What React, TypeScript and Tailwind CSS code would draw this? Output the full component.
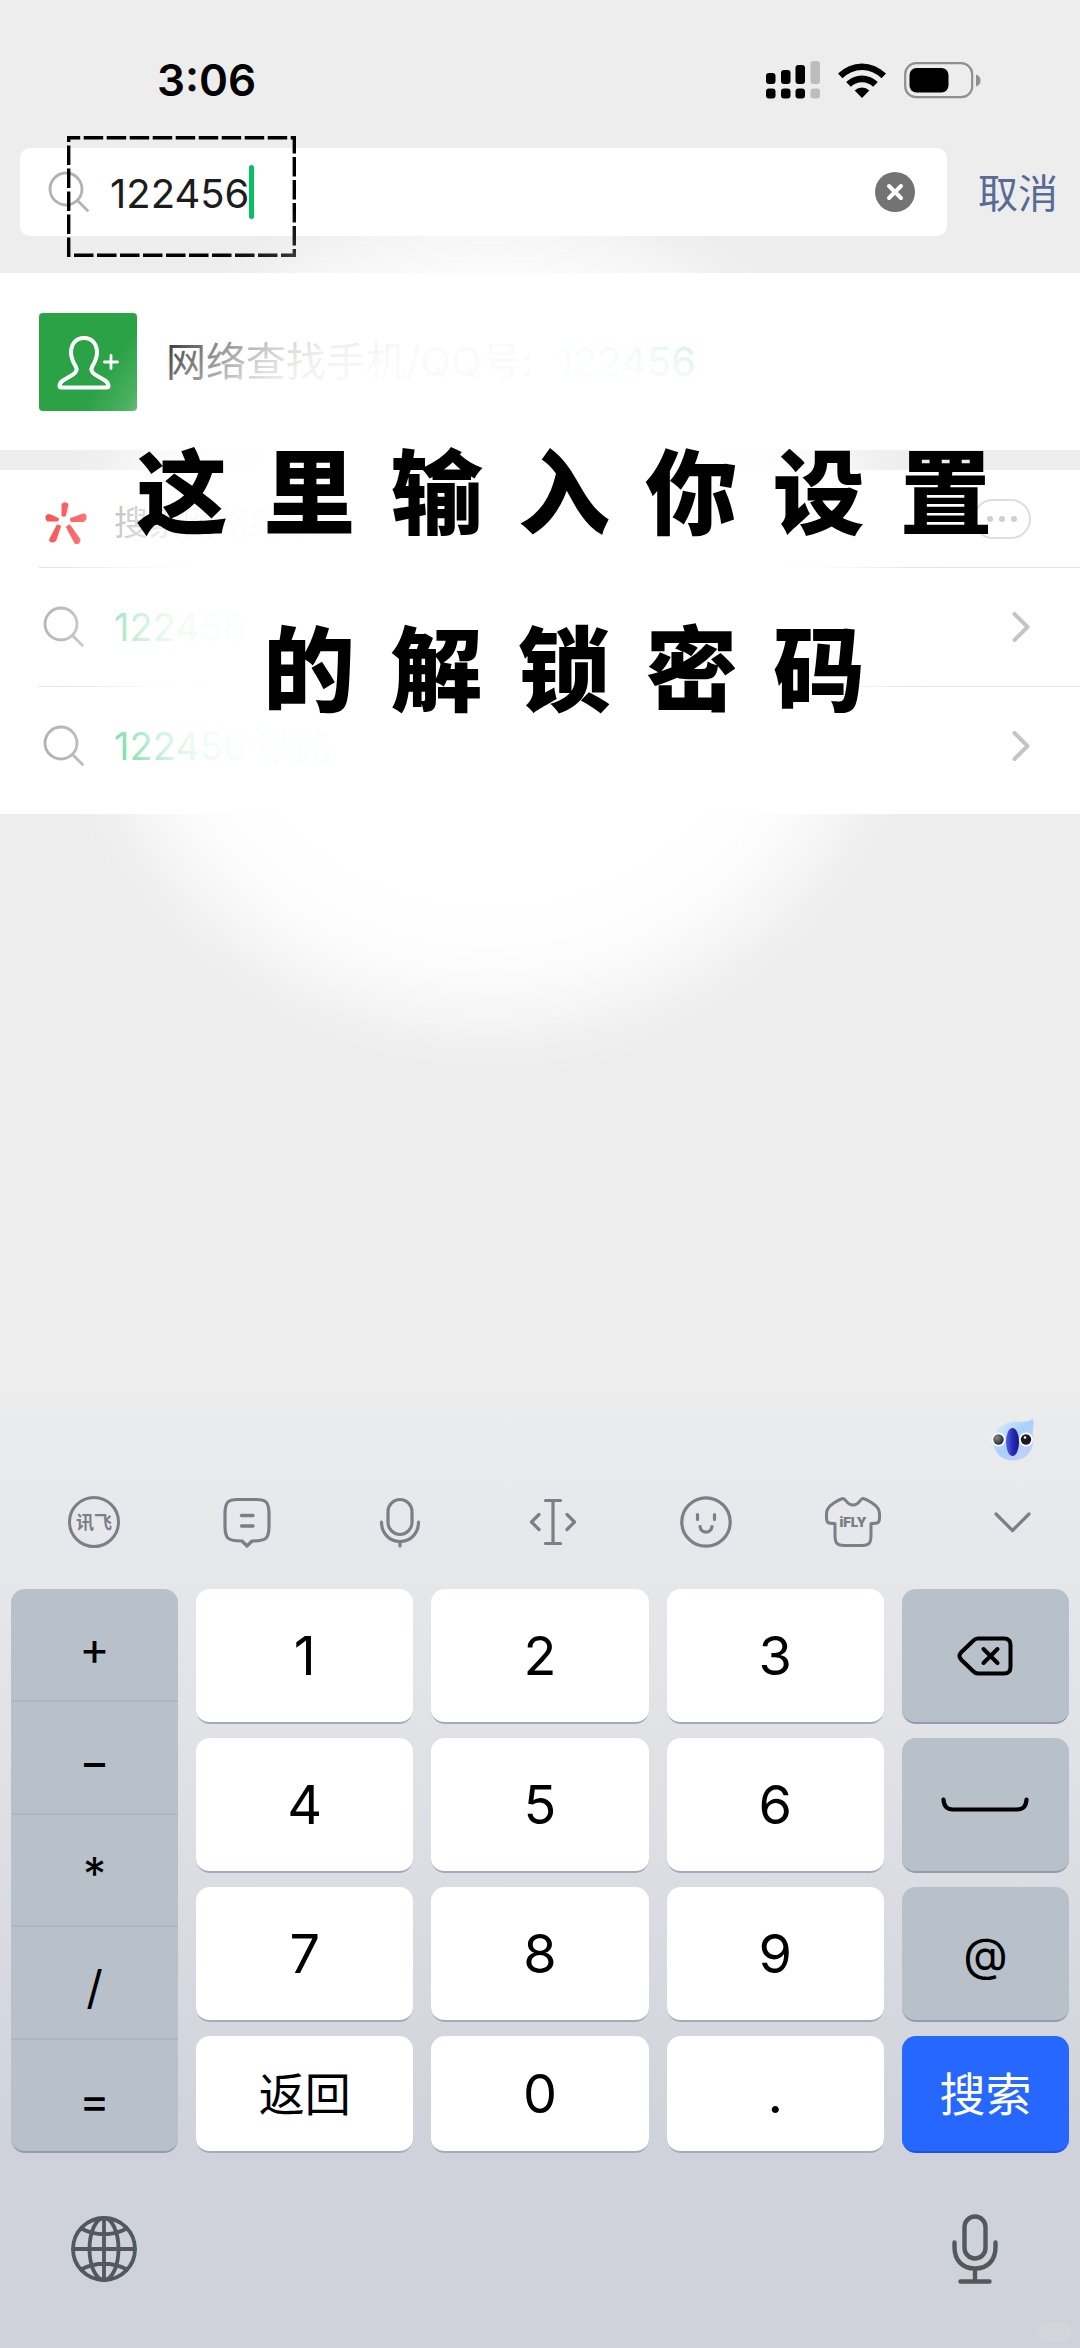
import React, { useState } from "react";

type IconProps = { className?: string };

const stroke = {
  fill: "none",
  stroke: "currentColor",
  strokeLinecap: "round" as const,
  strokeLinejoin: "round" as const,
};

function Magnifier({ className }: IconProps) {
  return (
    <svg viewBox="0 0 42 42" className={className} {...stroke} strokeWidth="2.8" aria-hidden="true">
      <circle cx="18" cy="18" r="16" />
      <path d="M29.500 29.500 39.500 39.500" />
    </svg>
  );
}

function Chevron({ className }: IconProps) {
  return (
    <svg viewBox="0 0 18 32" className={className} {...stroke} strokeWidth="4" aria-hidden="true">
      <path d="M2.500 3 15.500 16 2.500 29" />
    </svg>
  );
}

function StatusIcons() {
  return (
    <div className="flex items-center">
      <svg viewBox="0 0 54 38" className="h-[38px] w-[54px]" aria-label="信号">
        <rect x="0" y="12" width="9.500" height="11" rx="3" />
        <rect x="15" y="9" width="9.500" height="14" rx="3" />
        <rect x="29.500" y="4" width="9.500" height="19" rx="3" />
        <rect x="44.500" y="0" width="9.500" height="23" rx="3" fill="#bdbdbd" />
        <rect x="0" y="27.500" width="9.500" height="10" rx="3" />
        <rect x="15" y="27.500" width="9.500" height="10" rx="3" />
        <rect x="29.500" y="27.500" width="9.500" height="10" rx="3" />
        <rect x="44.500" y="27.500" width="9.500" height="10" rx="3" fill="#bdbdbd" />
      </svg>
      <svg viewBox="0 0 48 36" className="ml-[18px] h-9 w-12" aria-label="无线网络">
        <path d="M0 11.500A34 34 0 0 1 48 11.500L43.500 16.200A27.500 27.500 0 0 0 4.500 16.200Z" />
        <path d="M8.200 20A22.500 22.500 0 0 1 39.800 20L35.200 24.800A16 16 0 0 0 12.800 24.800Z" />
        <path d="M16.700 28.500A10.500 10.500 0 0 1 31.300 28.500L24 36Z" />
      </svg>
      <svg viewBox="0 0 78 37" className="ml-[18px] h-[37px] w-[78px]" aria-label="电池">
        <rect x="1.200" y="1.200" width="67" height="34" rx="11" fill="none" stroke="#8f8f8f" strokeWidth="2.200" />
        <rect x="5.500" y="6" width="39" height="24.500" rx="7" />
        <path d="M72 12.500Q76.500 14 76.500 18.500T72 24.500Z" fill="#8f8f8f" />
      </svg>
    </div>
  );
}

function ContactIcon() {
  return (
    <span className="flex h-[98px] w-[98px] shrink-0 items-center justify-center rounded bg-[#2ba245]">
      <svg viewBox="0 0 98 98" className="h-[98px] w-[98px] text-white" {...stroke} strokeWidth="4" aria-hidden="true">
        <path d="M45 25C36.500 25 32 31.500 32 39.500C32 46 35 50.500 37 54C38.500 57 37 59.500 34 61.500L24 67.500C21 69.500 20.500 71 20.500 73C20.500 74.500 21.500 74.500 22.500 74.500H67.500C68.500 74.500 69.500 74.500 69.500 73C69.500 71 69 69.500 66 67.500L56 61.500C53 59.500 51.500 57 53 54C55 50.500 58 46 58 39.500C58 31.500 53.500 25 45 25Z" />
        <path d="M72 42.500V55.500M65.500 49H78.500" strokeWidth="2.800" />
      </svg>
    </span>
  );
}

function Spark() {
  return (
    <svg viewBox="0 0 42 42" className="ml-1.5 h-[42px] w-[42px] text-[#fa5151]" fill="currentColor" stroke="currentColor" strokeWidth="2" strokeLinejoin="round" aria-hidden="true">
      <path d="M17.500 2.500Q20 0 22.500 2.500L20 13.500H17.500Z" />
      <path d="M1.500 14.500Q3 12 5.500 13.500L13 17 12.500 18.500 3 18.500Q1 17.500 1.500 14.500Z" />
      <path d="M40.500 14Q39.500 11.500 37 13L26 17 26.500 19 38 19Q41 18 40.500 14Z" />
      <path d="M12.500 23.500 15 24.500 10.500 38Q7.500 41 5 38Z" />
      <path d="M22 25 24.500 23.500 34.500 37.500Q34.500 41.500 30.500 41Z" />
    </svg>
  );
}

const tool = "h-[52px] w-[52px]";

function BrandIcon() {
  return (
    <svg viewBox="0 0 52 52" className={tool} {...stroke} strokeWidth="3" aria-hidden="true">
      <circle cx="26" cy="26" r="24.500" />
      <text x="26" y="32.500" textAnchor="middle" fontSize="18" fontWeight="700" fill="currentColor" stroke="none" fontFamily="'Noto Sans CJK SC', sans-serif">
        讯飞
      </text>
    </svg>
  );
}

function NoteIcon() {
  return (
    <svg viewBox="0 0 52 52" className={tool} {...stroke} strokeWidth="3.200" aria-hidden="true">
      <path d="M21 45C7 45 4 43 4 30V18C4 6 7 3.500 17 3.500H35C45 3.500 48 6 48 18V30C48 43 45 45 31 45L26 50Z" />
      <path d="M20.500 19.500H32M20.500 30H32" strokeWidth="3.400" />
    </svg>
  );
}

function SmallMic() {
  return (
    <svg viewBox="0 0 52 52" className={tool} {...stroke} strokeWidth="3.200" aria-hidden="true">
      <rect x="14" y="3.500" width="24" height="35" rx="12" />
      <path d="M7.500 26C7.500 37 15 45.500 26 45.500S44.500 37 44.500 26M26 45.500V50" />
    </svg>
  );
}

function CursorIcon() {
  return (
    <svg viewBox="0 0 52 52" className={tool} {...stroke} strokeWidth="3.200" aria-hidden="true">
      <path d="M18.500 4.500H33.500M18.500 47.500H33.500M26 4.500V47.500M12 18.500 4.500 26 12 33.500M40 18.500 47.500 26 40 33.500" />
    </svg>
  );
}

function SmileIcon() {
  return (
    <svg viewBox="0 0 52 52" className={tool} {...stroke} strokeWidth="3.200" aria-hidden="true">
      <circle cx="26" cy="26" r="24.200" />
      <path d="M17.500 18.500V23.500M34.500 18.500V23.500M20 30.500C21 38 31 38 32 30.500" />
    </svg>
  );
}

function ShirtIcon() {
  return (
    <svg viewBox="0 0 56 52" className="h-[52px] w-14" {...stroke} strokeWidth="3" aria-hidden="true">
      <path d="M18 2.500C21 2.500 21.500 9 28 9S35 2.500 38 2.500C42 3.500 48 7.500 51 10C55 14 54.500 17 54.500 22C54.500 27 53 27.500 46 27.500V39C46 47 44 49.500 37 49.500H19C12 49.500 10 47 10 39V27.500C3 27.500 1.500 27 1.500 22C1.500 17 1 14 5 10C8 7.500 14 3.500 18 2.500Z" />
      <text x="28" y="31" textAnchor="middle" fontSize="13" fontWeight="900" fill="currentColor" stroke="none" fontFamily="Inter, sans-serif">
        iFLY
      </text>
    </svg>
  );
}

function CollapseIcon() {
  return (
    <svg viewBox="0 0 52 52" className={tool} {...stroke} strokeWidth="3.200" aria-hidden="true">
      <path d="M10 18 26.500 34.500 43 18" />
    </svg>
  );
}

function Mascot() {
  return (
    <svg viewBox="0 0 44 44" className="h-11 w-11" aria-hidden="true">
      <defs>
        <linearGradient id="body" x1="0" y1="0" x2="1" y2="1">
          <stop offset="0" stopColor="#e6eefb" />
          <stop offset="0.5" stopColor="#a9d0fc" />
          <stop offset="1" stopColor="#cfcffb" />
        </linearGradient>
        <linearGradient id="beak" x1="0" y1="0" x2="1" y2="0">
          <stop offset="0" stopColor="#5560e6" />
          <stop offset="0.5" stopColor="#2a2cb8" />
          <stop offset="1" stopColor="#17158a" />
        </linearGradient>
        <radialGradient id="eye" cx="0.35" cy="0.35" r="0.7">
          <stop offset="0" stopColor="#85888c" />
          <stop offset="1" stopColor="#26282c" />
        </radialGradient>
      </defs>
      <path d="M42 1C43.500 7 41 12 42 18C44 33 35 42.500 22 42.500C10 42.500 2 34 2 22C4 10 13 4 24 3.500C32 4 38 4 42 1Z" fill="url(#body)" />
      <circle cx="7.500" cy="21.500" r="7" fill="#fff" />
      <circle cx="35" cy="21.500" r="7" fill="#fff" />
      <circle cx="7.500" cy="21.500" r="5.200" fill="url(#eye)" />
      <circle cx="35" cy="21.500" r="5.200" fill="#191a1f" />
      <circle cx="34" cy="19.500" r="1.300" fill="#fff" />
      <ellipse cx="21.500" cy="24" rx="6.500" ry="14" fill="url(#beak)" />
    </svg>
  );
}

function Backspace() {
  return (
    <svg viewBox="0 0 56 40" className="h-10 w-14" {...stroke} strokeWidth="4" aria-hidden="true">
      <path d="M21 2.500H47Q53.500 2.500 53.500 9V31Q53.500 37.500 47 37.500H21Q18.500 37.500 16.500 35.500L4 23.500Q1 20 4 16.500L16.500 4.500Q18.500 2.500 21 2.500Z" />
      <path d="M26.500 13 40.500 27M40.500 13 26.500 27" />
    </svg>
  );
}

function SpaceBar() {
  return (
    <svg viewBox="0 0 88 16" className="h-4 w-[88px]" {...stroke} strokeWidth="4.200" aria-hidden="true">
      <path d="M2.500 2.500Q3 12.500 12 12.500H76Q85 12.500 85.500 2.500" />
    </svg>
  );
}

function Globe() {
  return (
    <svg viewBox="0 0 66 66" className="h-[66px] w-[66px]" {...stroke} strokeWidth="3.800" aria-hidden="true">
      <circle cx="33" cy="33" r="31" />
      <ellipse cx="33" cy="33" rx="14.500" ry="31" />
      <path d="M33 2V64M2 33H64M10 12.500Q33 24 56 12.500M10 53.500Q33 42 56 53.500" />
    </svg>
  );
}

function LargeMic() {
  return (
    <svg viewBox="0 0 46 70" className="h-[70px] w-[46px]" {...stroke} strokeWidth="4.400" aria-hidden="true">
      <rect x="12.500" y="2.500" width="21" height="42" rx="10.500" />
      <path d="M2.500 28.500V33C2.500 46 10 54.500 23 54.500S43.500 46 43.500 33V28.500M23 54.500V67.500M8.500 67.500H37.500" />
    </svg>
  );
}

const whiteKey = "flex items-center justify-center rounded-[14px] border-b-2 border-[#a3aabb] bg-white";
const greyKey = "flex items-center justify-center rounded-[14px] border-b-2 border-[#939bb0] bg-[#b8c0ca]";

function Key({ children, label, tone = "white" }: { children: React.ReactNode; label?: string; tone?: "white" | "grey" }) {
  return (
    <button type="button" aria-label={label} className={tone === "white" ? whiteKey : greyKey}>
      {children}
    </button>
  );
}

const suggestions = ["122456", "122456 铁路"];
const symbols = ["+", "−", "*", "/", "="];

export default function App() {
  const [query, setQuery] = useState("122456");

  return (
    <div className="relative flex min-h-screen flex-col overflow-hidden bg-[#ededed] font-[Inter,'Noto_Sans_CJK_SC',sans-serif] text-black">
      <header>
        <div className="flex h-[148px] items-center justify-between pt-3 pr-[98px] pl-[157px]">
          <time className="text-[44px] leading-none font-semibold">3:06</time>
          <StatusIcons />
        </div>
        <form className="relative flex items-center pb-[37px] pl-5" onSubmit={(e) => e.preventDefault()}>
          <div className="flex h-[88px] flex-1 items-center rounded-[10px] bg-white pr-8 pl-7">
            <Magnifier className="h-[42px] w-[42px] shrink-0 text-[#b2b2b2]" />
            <input
              aria-label="搜索"
              value={query}
              onChange={(e) => setQuery(e.target.value)}
              className="ml-5 [field-sizing:content] pt-1 text-[40px] leading-[54px] text-[#1c1c1c] outline-none"
            />
            <span className="h-[54px] w-[5px] rounded-sm bg-[#07c160]" />
            <button type="button" aria-label="清除" onClick={() => setQuery("")} className="ml-auto flex h-10 w-10 items-center justify-center rounded-full bg-[#737373] text-white">
              <svg viewBox="0 0 40 40" className="h-10 w-10" {...stroke} strokeWidth="4" aria-hidden="true">
                <path d="M14 14 26 26M26 14 14 26" />
              </svg>
            </button>
          </div>
          <button type="button" className="pt-1 pr-[22px] pl-[31px] text-[40px] leading-none text-[#576b95]">
            取消
          </button>
          <svg viewBox="0 0 229 121" className="pointer-events-none absolute -top-3 left-[67px] h-[121px] w-[229px]" fill="none" stroke="#000" strokeWidth="3.400" strokeDasharray="19.500 3.500" strokeDashoffset="8" aria-hidden="true">
            <rect x="1.700" y="1.700" width="225.600" height="117.600" />
          </svg>
        </form>
      </header>

      <main className="flex-1">
        <button type="button" className="flex h-[177px] w-full items-center gap-[29px] bg-white pl-[39px] text-left">
          <ContactIcon />
          <span className="text-[40px] leading-none text-[#1c1c1c]">
            网络查找手机/QQ号: <span className="ml-3 text-[#07c160]">122456</span>
          </span>
        </button>

        <section className="mt-5 bg-white pb-[9px]">
          <div className="ml-[39px] flex h-[98px] items-center border-b border-[#e2e2e2] pr-[49px]">
            <div className="flex items-center pt-2">
              <Spark />
              <h2 className="ml-[27px] text-[34px] leading-none text-[#8a8a8a]">搜索网络结果</h2>
            </div>
            <button type="button" aria-label="更多" className="ml-auto flex h-10 w-[58px] items-center justify-center gap-1.5 rounded-full border-2 border-[#dedede]">
              <span className="h-1.5 w-1.5 rounded-full bg-[#cfcfcf]" />
              <span className="h-1.5 w-1.5 rounded-full bg-[#cfcfcf]" />
              <span className="h-1.5 w-1.5 rounded-full bg-[#cfcfcf]" />
            </button>
          </div>
          <ul>
            {suggestions.map((text, i) => (
              <li key={text} className={i === 0 ? "ml-[39px] border-b border-[#e2e2e2]" : "ml-[39px]"}>
                <a href="#result" className="flex h-[118px] items-center pr-[50px] pl-1">
                  <Magnifier className="h-[42px] w-[42px] text-[#b2b2b2]" />
                  <span className="ml-[29px] text-[38px] leading-none text-[#07c160]">{text}</span>
                  <Chevron className="ml-auto h-8 w-[18px] text-[#c4c4c4]" />
                </a>
              </li>
            ))}
          </ul>
        </section>
      </main>

      {/* Soft spotlight behind the caption */}
      <div className="pointer-events-none absolute top-[164px] left-[30px] h-[920px] w-[920px] bg-[radial-gradient(circle,rgba(255,255,255,0.98)_280px,rgba(255,255,255,0.93)_320px,rgba(255,255,255,0.8)_350px,rgba(255,255,255,0.45)_395px,rgba(255,255,255,0.15)_425px,transparent_460px)]" />

      <div className="pointer-events-none absolute inset-x-0 top-[398px] flex flex-col items-center pl-12 font-['Noto_Sans_CJK_SC',sans-serif] text-[92px] leading-[177px] font-black">
        <p className="w-[856px] [text-align-last:justify]">这里输入你设置</p>
        <p className="w-[602px] [text-align-last:justify]">的解锁密码</p>
      </div>

      <section aria-label="键盘" className="bg-linear-to-b from-[#ebecee] via-[#dfe1e5] via-40% to-[#cfd2da] to-80%">
        <div className="flex h-[82px] items-center justify-end pr-[45px]">
          <Mascot />
        </div>
        <div className="flex h-[82px] items-center justify-between pr-[30px] pl-[68px] text-[#7b7f87]">
          <div className="flex gap-[101px]">
            <button type="button" aria-label="讯飞输入法"><BrandIcon /></button>
            <button type="button" aria-label="短语"><NoteIcon /></button>
            <button type="button" aria-label="语音"><SmallMic /></button>
            <button type="button" aria-label="光标"><CursorIcon /></button>
            <button type="button" aria-label="表情"><SmileIcon /></button>
          </div>
          <button type="button" aria-label="皮肤"><ShirtIcon /></button>
          <button type="button" aria-label="收起" className="flex w-[76px] justify-center"><CollapseIcon /></button>
        </div>

        <div className="grid grid-cols-[167fr_217fr_217fr_217fr_167fr] grid-rows-[135px_135px_135px_117px] gap-x-[18px] gap-y-3.5 px-[11px] pt-[26px] text-[54px] leading-none">
          <div className="row-span-4 flex flex-col divide-y-2 divide-[#aeb6c2] overflow-hidden rounded-[14px] border-b-2 border-[#939bb0] bg-[#b8c0ca] text-[46px]">
            {symbols.map((s) => (
              <button key={s} type="button" className="flex-1 pt-2 leading-none">
                {s}
              </button>
            ))}
          </div>
          <Key>1</Key>
          <Key>2</Key>
          <Key>3</Key>
          <Key tone="grey" label="删除"><Backspace /></Key>
          <Key>4</Key>
          <Key>5</Key>
          <Key>6</Key>
          <Key tone="grey" label="空格"><SpaceBar /></Key>
          <Key>7</Key>
          <Key>8</Key>
          <Key>9</Key>
          <Key tone="grey"><span className="text-[46px]">@</span></Key>
          <Key><span className="text-[46px]">返回</span></Key>
          <Key>0</Key>
          <Key>.</Key>
          <button type="submit" className="rounded-[14px] border-b-2 border-[#1f55d8] bg-[#2668ff] text-[46px] text-white">
            搜索
          </button>
        </div>

        <div className="relative flex h-[195px] items-center justify-between pr-[82px] pb-1 pl-[71px] text-[#53575e]">
          <button type="button" aria-label="切换键盘"><Globe /></button>
          <button type="button" aria-label="听写"><LargeMic /></button>
          <span className="absolute right-2 bottom-1.5 h-5 w-9 rounded-full bg-[#d3d5db]" />
        </div>
      </section>
    </div>
  );
}
